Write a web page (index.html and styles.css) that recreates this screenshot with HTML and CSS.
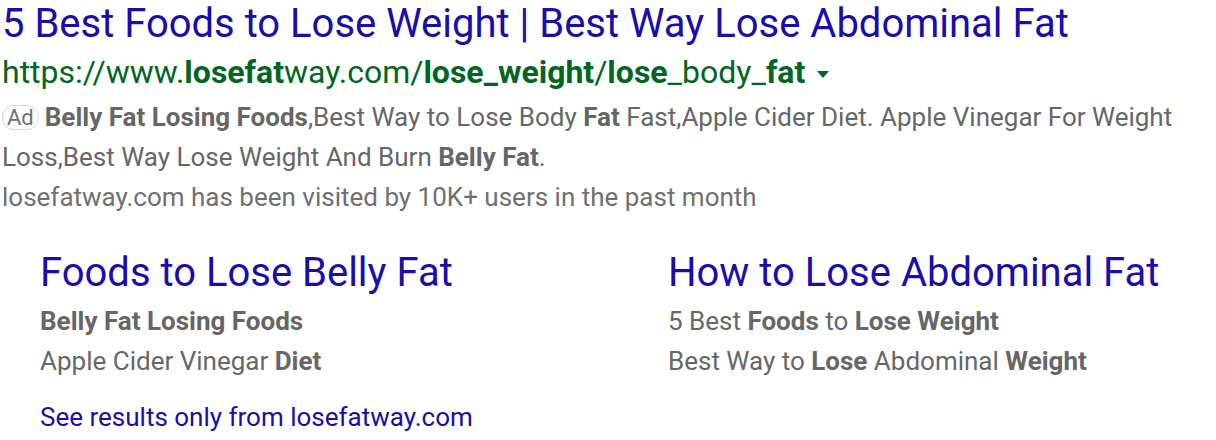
FILE: index.html
```html
<!DOCTYPE html>
<html lang="en">
<head>
<meta charset="utf-8">
<title>Ad result</title>
<link rel="stylesheet" href="styles.css">
</head>
<body>
<div class="result">
  <a class="title" href="#">5 Best Foods to Lose Weight | Best Way Lose Abdominal Fat</a>
  <div class="url">https://www.<b>losefat</b>way.com/<b>lose_weight</b>/<b>lose</b>_body_<b>fat</b><span class="caret"></span></div>
  <div class="desc">
    <span class="badge">Ad</span><b>Belly Fat Losing Foods</b>,Best Way to Lose Body <b>Fat</b> Fast,Apple Cider Diet. Apple Vinegar For Weight Loss,Best Way Lose Weight And Burn <b>Belly Fat</b>.
  </div>
  <div class="visited">losefatway.com has been visited by 10K+ users in the past month</div>
  <div class="sitelinks">
    <div class="sitelink">
      <a class="sl-title" href="#">Foods to Lose Belly Fat</a>
      <div class="sl-line"><b>Belly Fat Losing Foods</b></div>
      <div class="sl-line">Apple Cider Vinegar <b>Diet</b></div>
    </div>
    <div class="sitelink">
      <a class="sl-title" href="#">How to Lose Abdominal Fat</a>
      <div class="sl-line">5 Best <b>Foods</b> to <b>Lose Weight</b></div>
      <div class="sl-line">Best Way to <b>Lose</b> Abdominal <b>Weight</b></div>
    </div>
  </div>
  <a class="only" href="#">See results only from losefatway.com</a>
</div>
</body>
</html>
```

FILE: styles.css
```css
html, body {
  margin: 0;
  padding: 0;
  background: #ffffff;
}

body {
  font-family: Roboto, "Liberation Sans", Arial, sans-serif;
  color: #666666;
}

a {
  text-decoration: none;
}

.result {
  padding-left: 2px;
  display: flex;
  flex-direction: column;
  align-items: flex-start;
}

.title {
  display: block;
  font-size: 40px;
  line-height: 47px;
  color: #1a0dab;
}

.url {
  font-size: 32px;
  line-height: 50px;
  color: #006621;
  display: flex;
  align-items: center;
  white-space: pre;
}

.url b {
  font-weight: 700;
}

.caret {
  width: 0;
  height: 0;
  border-left: 6px solid transparent;
  border-right: 6px solid transparent;
  border-top: 7px solid #006621;
  margin-left: 12px;
  margin-top: 5px;
}

.desc {
  font-size: 26px;
  line-height: 40px;
  color: #676767;
  width: 1200px;
}

.desc b,
.sl-line b {
  font-weight: 700;
  color: #666666;
}

.badge {
  display: inline-block;
  box-sizing: border-box;
  height: 25px;
  line-height: 23px;
  padding: 0 4px;
  margin-right: 6px;
  border: 1px solid #d8d8d8;
  border-radius: 12px;
  font-size: 22px;
  color: #707070;
  vertical-align: 1px;
}

.visited {
  font-size: 26px;
  line-height: 40px;
  color: #707070;
}

.sitelinks {
  display: grid;
  grid-template-columns: 628px 1fr;
  padding-left: 38px;
  margin-top: 28px;
  width: 1176px;
}

.sl-title {
  display: block;
  font-size: 40px;
  line-height: 56px;
  color: #1a0dab;
}

.sl-line {
  font-size: 26px;
  line-height: 40px;
  color: #676767;
}

.only {
  display: block;
  margin-left: 38px;
  margin-top: 16px;
  font-size: 26px;
  line-height: 40px;
  color: #1a0dab;
}
```
